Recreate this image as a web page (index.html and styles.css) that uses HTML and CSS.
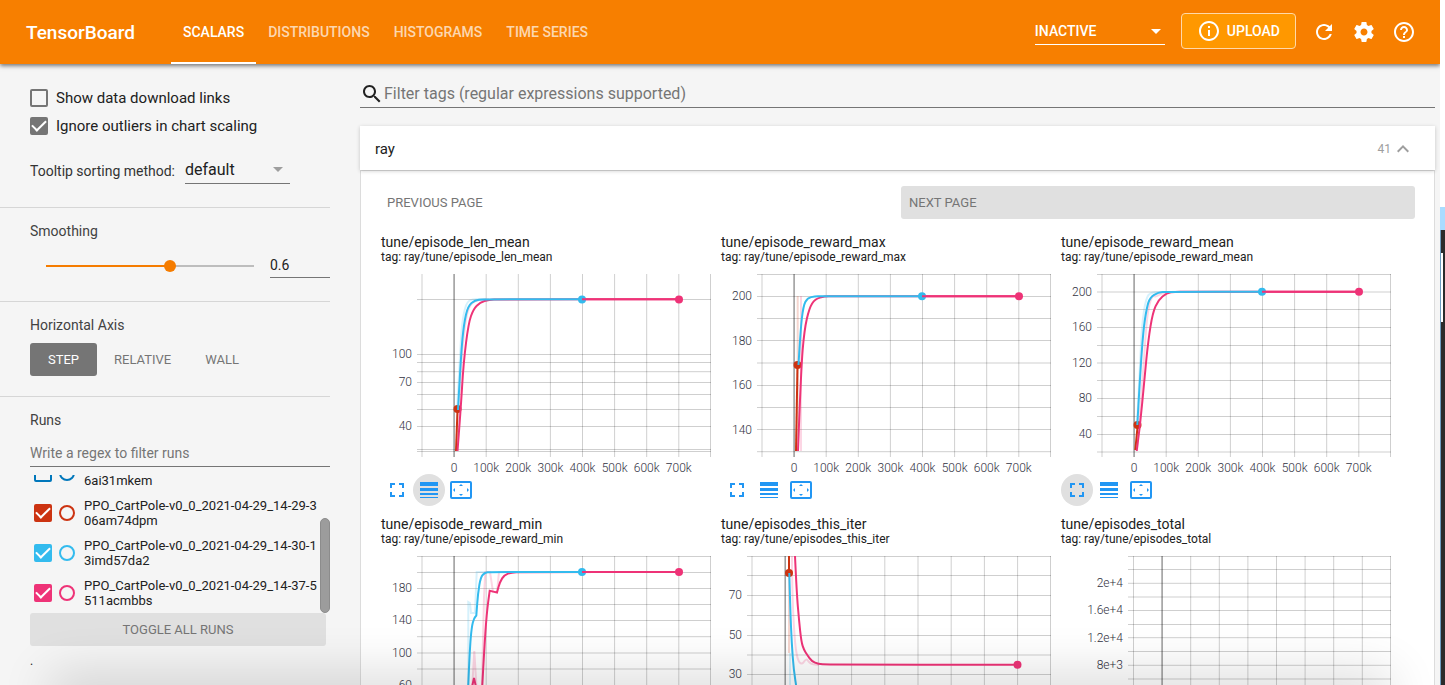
FILE: index.html
```
<!DOCTYPE html>
<html lang="en">
    <head>
        <meta charset="utf-8">
        <title>TensorBoard</title>
        <meta name="viewport" content="width=device-width, initial-scale=1">
        <link rel="stylesheet" href="styles.css">
    </head>
    <body>
        <div class="app">
            <header class="toolbar">
                <div class="brand">TensorBoard</div>
                <nav class="tabs">
                    <a href="#scalars" class="tab active">SCALARS</a>
                    <a href="#distributions" class="tab">DISTRIBUTIONS</a>
                    <a href="#histograms" class="tab">HISTOGRAMS</a>
                    <a href="#timeseries" class="tab">TIME SERIES</a>
                </nav>
                <div class="select-wrap plugins">
                    <select aria-label="Inactive plugins">
                        <option>INACTIVE</option>
                    </select>
                </div>
                <button class="upload">
                    <svg width="24" height="24" viewBox="0 0 24 24"><path d="M11 17h2v-6h-2v6zm1-15C6.48 2 2 6.48 2 12s4.48 10 10 10 10-4.48 10-10S17.52 2 12 2zm0 18c-4.41 0-8-3.59-8-8s3.59-8 8-8 8 3.59 8 8-3.59 8-8 8zM11 9h2V7h-2v2z"/></svg>
                    UPLOAD
                </button>
                <div class="toolbar-icons">
                    <button aria-label="Reload">
                        <svg width="24" height="24" viewBox="0 0 24 24"><path d="M17.65 6.35C16.2 4.9 14.21 4 12 4c-4.42 0-7.99 3.58-7.99 8s3.57 8 7.99 8c3.73 0 6.84-2.55 7.73-6h-2.08c-.82 2.33-3.04 4-5.65 4-3.31 0-6-2.69-6-6s2.69-6 6-6c1.66 0 3.14.69 4.22 1.78L13 11h7V4l-2.35 2.35z"/></svg>
                    </button>
                    <button aria-label="Settings">
                        <svg width="24" height="24" viewBox="0 0 24 24"><path d="M19.43 12.98c.04-.32.07-.64.07-.98s-.03-.66-.07-.98l2.11-1.65c.19-.15.24-.42.12-.64l-2-3.46c-.12-.22-.39-.3-.61-.22l-2.49 1c-.52-.4-1.08-.73-1.69-.98l-.38-2.65C14.46 2.18 14.25 2 14 2h-4c-.25 0-.46.18-.49.42l-.38 2.65c-.61.25-1.17.59-1.69.98l-2.49-1c-.23-.09-.49 0-.61.22l-2 3.46c-.13.22-.07.49.12.64l2.11 1.65c-.04.32-.07.65-.07.98s.03.66.07.98l-2.11 1.65c-.19.15-.24.42-.12.64l2 3.46c.12.22.39.3.61.22l2.49-1c.52.4 1.08.73 1.69.98l.38 2.65c.03.24.24.42.49.42h4c.25 0 .46-.18.49-.42l.38-2.65c.61-.25 1.17-.59 1.69-.98l2.49 1c.23.09.49 0 .61-.22l2-3.46c.12-.22.07-.49-.12-.64l-2.11-1.65zM12 15.5c-1.93 0-3.5-1.57-3.5-3.5s1.57-3.5 3.5-3.5 3.5 1.57 3.5 3.5-1.57 3.5-3.5 3.5z"/></svg>
                    </button>
                    <button aria-label="Help">
                        <svg width="24" height="24" viewBox="0 0 24 24"><path d="M11 18h2v-2h-2v2zm1-16C6.48 2 2 6.48 2 12s4.48 10 10 10 10-4.48 10-10S17.52 2 12 2zm0 18c-4.41 0-8-3.59-8-8s3.59-8 8-8 8 3.59 8 8-3.59 8-8 8zm0-14c-2.21 0-4 1.79-4 4h2c0-1.1.9-2 2-2s2 .9 2 2c0 2-3 1.75-3 5h2c0-2.25 3-2.5 3-5 0-2.21-1.79-4-4-4z"/></svg>
                    </button>
                </div>
            </header>

            <div class="page">
                <aside class="sidebar">
                    <section class="options">
                        <label class="check-row"><input type="checkbox" class="check">Show data download links</label>
                        <label class="check-row"><input type="checkbox" class="check" checked>Ignore outliers in chart scaling</label>
                        <div class="sorting">
                            <label for="sort-method">Tooltip sorting method:</label>
                            <div class="select-wrap sort">
                                <select id="sort-method">
                                    <option>default</option>
                                </select>
                            </div>
                        </div>
                    </section>
                    <section class="smoothing">
                        <label class="heading" for="smooth-range">Smoothing</label>
                        <div class="slider-row">
                            <input type="range" id="smooth-range" min="0" max="1" step="0.01" value="0.6">
                            <input type="text" id="smooth-value" aria-label="Smoothing value" value="0.6">
                        </div>
                    </section>
                    <section class="axis">
                        <div class="heading">Horizontal Axis</div>
                        <div class="axis-buttons">
                            <button class="selected">STEP</button>
                            <button>RELATIVE</button>
                            <button>WALL</button>
                        </div>
                    </section>
                    <section class="runs">
                        <label class="heading" for="run-filter">Runs</label>
                        <input type="text" id="run-filter" placeholder="Write a regex to filter runs">
                        <div class="run-scroller">
                            <div class="run-list" id="run-list">
                                <div class="run blue">
                                    <input type="checkbox" class="check" id="run-1">
                                    <input type="radio" name="run" aria-label="Only run 1">
                                    <label for="run-1">PPO_CartPole-v0_0_2021-04-29_14-28-56ai31mkem</label>
                                </div>
                                <div class="run red">
                                    <input type="checkbox" class="check" id="run-2" checked>
                                    <input type="radio" name="run" aria-label="Only run 2">
                                    <label for="run-2">PPO_CartPole-v0_0_2021-04-29_14-29-306am74dpm</label>
                                </div>
                                <div class="run cyan">
                                    <input type="checkbox" class="check" id="run-3" checked>
                                    <input type="radio" name="run" aria-label="Only run 3">
                                    <label for="run-3">PPO_CartPole-v0_0_2021-04-29_14-30-13imd57da2</label>
                                </div>
                                <div class="run pink">
                                    <input type="checkbox" class="check" id="run-4" checked>
                                    <input type="radio" name="run" aria-label="Only run 4">
                                    <label for="run-4">PPO_CartPole-v0_0_2021-04-29_14-37-5511acmbbs</label>
                                </div>
                            </div>
                            <div class="scroll-thumb"></div>
                        </div>
                        <button class="toggle-all">TOGGLE ALL RUNS</button>
                        <div class="logdir">.</div>
                    </section>
                </aside>

                <main class="center">
                    <div class="tag-filter">
                        <svg width="24" height="24" viewBox="0 0 24 24"><path d="M15.5 14h-.79l-.28-.27C15.41 12.59 16 11.11 16 9.5 16 5.91 13.09 3 9.5 3S3 5.91 3 9.5 5.91 16 9.5 16c1.61 0 3.09-.59 4.23-1.57l.27.28v.79l5 4.99L20.49 19l-4.99-5zm-6 0C7.01 14 5 11.99 5 9.5S7.01 5 9.5 5 14 7.01 14 9.5 11.99 14 9.5 14z"/></svg>
                        <input type="text" aria-label="Filter tags" placeholder="Filter tags (regular expressions supported)">
                    </div>
                    <button class="group-header">
                        <span>ray</span>
                        <span class="count">41</span>
                        <svg width="24" height="24" viewBox="0 0 24 24"><path d="M12 8l-6 6 1.41 1.41L12 10.83l4.59 4.58L18 14z"/></svg>
                    </button>
                    <div class="group-body">
                        <div class="pager">
                            <button disabled>PREVIOUS PAGE</button>
                            <button class="next">NEXT PAGE</button>
                        </div>
                        <div class="cards" id="cards"></div>
                    </div>
                </main>
            </div>
            <div class="bottom-shade"></div>
        </div>
        <div class="backdrop">
            <div class="sky"></div>
            <div class="dock"></div>
            <div class="sheet"></div>
            <div class="dock rest"></div>
        </div>
        <script src="charts.js"></script>
    </body>
</html>
```
FILE: styles.css
```
* {
    box-sizing: border-box;
}

body {
    margin: 0;
    height: 100vh;
    display: flex;
    overflow: hidden;
    font-family: Roboto, "Noto Sans", sans-serif;
    font-size: 14px;
    color: #212121;
    background: #fff;
}

button, input, select {
    font-family: inherit;
    color: inherit;
    border: 0;
    border-radius: 0;
    background: none;
    padding: 0;
    margin: 0;
    outline: 0;
}

button {
    cursor: pointer;
}

.app {
    flex: 1;
    min-width: 0;
    display: flex;
    flex-direction: column;
    background: #f5f5f5;
    overflow: hidden;
    position: relative;
}

/* toolbar */

.toolbar {
    flex: none;
    height: 64px;
    display: flex;
    align-items: center;
    padding: 0 16px 0 26px;
    background: #f77f00;
    color: #fff;
    box-shadow: 0 2px 4px rgba(0, 0, 0, .5);
    z-index: 1;
}

.brand {
    font-size: 19px;
    font-weight: 500;
    width: 145px;
}

.tabs {
    flex: 1;
    display: flex;
    align-self: stretch;
}

.tab {
    display: flex;
    align-items: center;
    padding: 2px 12px 0;
    color: rgba(255, 255, 255, .7);
    font-weight: 500;
    text-decoration: none;
    border-bottom: 2px solid transparent;
}

.tab.active {
    color: #fff;
    border-bottom-color: #fff;
}

.select-wrap {
    display: flex;
    align-items: center;
    border-bottom: 1px solid #757575;
}

.select-wrap select {
    flex: 1;
    appearance: none;
}

.select-wrap::after {
    content: "";
    margin: 0 7px 0 -17px;
    border: 5px solid transparent;
    border-top-color: #9e9e9e;
    border-bottom: 0;
    pointer-events: none;
}

.plugins {
    width: 130px;
    height: 26px;
    padding-bottom: 1px;
    border-bottom-color: #fff;
}

.plugins select {
    font-size: 14px;
    font-weight: 500;
}

.plugins::after {
    margin-right: 4px;
    margin-left: -14px;
    border-top-color: #fff;
}

.upload {
    display: flex;
    align-items: center;
    gap: 6px;
    height: 36px;
    margin: 0 8px 2px 16px;
    padding: 0 15px;
    border: 1px solid #ffd9a8;
    border-radius: 4px;
    background: #ff9800;
    font-size: 14px;
    font-weight: 500;
}

.toolbar svg {
    fill: #fff;
}

.toolbar-icons {
    display: flex;
}

.toolbar-icons button {
    width: 40px;
    height: 40px;
    padding: 8px;
}

/* sidebar */

.page {
    flex: 1;
    min-height: 0;
    display: flex;
    gap: 30px;
    padding-right: 5px;
}

.sidebar {
    flex: none;
    width: 330px;
}

.sidebar section {
    padding-left: 30px;
    border-bottom: 1px solid #d6d6d6;
}

.sidebar .runs {
    border-bottom: 0;
}

.heading {
    display: block;
    line-height: 16px;
    color: #424242;
}

.options {
    height: 144px;
    padding-top: 20px;
}

.check-row {
    display: flex;
    align-items: center;
    gap: 8px;
    height: 28px;
    font-size: 15px;
}

.check {
    flex: none;
    appearance: none;
    display: grid;
    place-items: center;
    width: 18px;
    height: 18px;
    border: 2px solid #757575;
    border-radius: 2px;
}

.check:checked {
    background: #757575;
}

.check:checked::after {
    content: "";
    width: 6px;
    height: 12px;
    margin-top: -5px;
    border: solid #fff;
    border-width: 0 2px 2px 0;
    transform: rotate(45deg);
}

.sorting {
    display: flex;
    align-items: flex-end;
    gap: 10px;
    margin-top: 16px;
    color: #333;
}

.sorting label {
    line-height: 26px;
}

.sort {
    width: 105px;
    height: 28px;
}

.sort select {
    font-size: 16px;
    color: #212121;
}

.smoothing {
    height: 94px;
    padding-top: 15px;
}

.slider-row {
    display: flex;
    align-items: center;
    gap: 16px;
    margin-top: 14px;
    padding-left: 16px;
}

#smooth-range {
    flex: 1;
    min-width: 0;
    height: 12px;
    appearance: none;
}

#smooth-range::-webkit-slider-runnable-track {
    height: 2px;
    background: linear-gradient(to right, #f57c00 60%, #bdbdbd 60%);
}

#smooth-range::-webkit-slider-thumb {
    appearance: none;
    width: 12px;
    height: 12px;
    margin-top: -5px;
    border-radius: 50%;
    background: #f57c00;
}

#smooth-value {
    width: 60px;
    height: 25px;
    font-size: 14px;
    border-bottom: 1px solid #757575;
}

.axis {
    height: 95px;
    padding-top: 15px;
}

.axis-buttons {
    display: flex;
    margin-top: 10px;
}

.axis-buttons button {
    height: 33px;
    padding: 0 17px;
    border-radius: 3px;
    font-size: 13px;
    color: #757575;
}

.axis-buttons .selected {
    padding: 0 18px;
    background: #757575;
    color: #fff;
}

.runs {
    padding-top: 15px;
}

#run-filter {
    display: block;
    width: 100%;
    height: 27px;
    margin-top: 12px;
    font-size: 14px;
    border-bottom: 1px solid #757575;
}

::placeholder {
    color: #757575;
}

.run-scroller {
    display: flex;
    height: 138px;
    margin-top: 8px;
}

.run-list {
    flex: 1;
    overflow-y: auto;
    scrollbar-width: none;
}

.scroll-thumb {
    align-self: flex-end;
    width: 10px;
    height: 95px;
    border: 1px solid #8c8c8c;
    border-radius: 5px;
    background: #9c9c9c;
}

.run {
    display: flex;
    align-items: center;
    height: 40px;
    padding-left: 4px;
    font-size: 13px;
    line-height: 15px;
}

.run label {
    width: 234px;
    word-break: break-all;
}

.run .check {
    border-color: currentColor;
}

.run .check:checked {
    background: currentColor;
}

.run input[type="radio"] {
    flex: none;
    appearance: none;
    width: 16px;
    height: 16px;
    margin: 0 9px 0 7px;
    border: 2px solid currentColor;
    border-radius: 50%;
}

.run.blue input { color: #0077bb; }
.run.red input { color: #cc3311; }
.run.cyan input { color: #33bbee; }
.run.pink input { color: #ee3377; }

.toggle-all {
    display: block;
    width: 296px;
    height: 33px;
    border-radius: 3px;
    background: #e0e0e0;
    color: #757575;
    font-size: 13px;
}

.logdir {
    margin-top: 8px;
    font-size: 12px;
    line-height: 14px;
}

/* charts */

.center {
    flex: 1;
    min-width: 0;
}

.tag-filter {
    display: flex;
    align-items: center;
    height: 28px;
    margin: 16px 0 18px;
    border-bottom: 1px solid #757575;
}

.tag-filter svg {
    fill: #212121;
}

.tag-filter input {
    flex: 1;
    font-size: 16px;
}

.group-header {
    display: flex;
    align-items: center;
    width: 100%;
    height: 44px;
    padding: 1px 20px 0 15px;
    background: #fff;
    font-size: 15px;
    box-shadow: 0 1px 4px rgba(0, 0, 0, .2);
    position: relative;
}

.group-header .count {
    flex: 1;
    text-align: right;
    font-size: 12px;
    color: #9e9e9e;
}

.group-header svg {
    fill: #9e9e9e;
}

.group-body {
    padding: 15px 19px 0 18px;
    background: #fff;
    border: solid #dcdcdc;
    border-width: 1px 1px 0;
    min-height: 100%;
}

.pager {
    display: grid;
    grid-template-columns: 1fr 1fr;
    gap: 8px;
}

.pager button {
    height: 33px;
    padding: 0 8px;
    border-radius: 3px;
    text-align: left;
    font-size: 13px;
    color: #757575;
}

.pager .next {
    background: #e0e0e0;
}

.cards {
    display: flex;
    flex-wrap: wrap;
    gap: 10px;
    margin: 15px 0 0 2px;
}

.card {
    width: 330px;
}

.card h3 {
    margin: 0;
    font-size: 14px;
    font-weight: 400;
    line-height: 16px;
}

.card p {
    margin: 0 0 10px;
    font-size: 12px;
    line-height: 14px;
}

.chart {
    display: block;
    overflow: hidden;
}

.grid {
    stroke: #000;
    stroke-opacity: .19;
}

.grid .zero {
    stroke: #999;
    stroke-opacity: 1;
    stroke-width: 1.5;
}

.ticks {
    font-size: 12px;
    font-weight: 300;
    fill: #32323f;
}

.ticks .y { text-anchor: end; }
.ticks .x { text-anchor: middle; }

.line {
    fill: none;
    stroke-width: 2;
}

.faint {
    opacity: .2;
}

.line.red { stroke: #cc3311; }
.line.cyan { stroke: #33bbee; }
.line.pink { stroke: #ee3377; }
.dot.red { fill: #cc3311; }
.dot.cyan { fill: #33bbee; }
.dot.pink { fill: #ee3377; }

.actions {
    display: flex;
}

.actions button {
    display: grid;
    place-items: center;
    width: 32px;
    height: 32px;
    border-radius: 50%;
}

.actions button.on {
    background: #e0e0e0;
}

.actions svg {
    fill: #2196f3;
}

/* things behind and around the window */

.bottom-shade {
    position: absolute;
    left: 60px;
    right: 60px;
    bottom: -20px;
    height: 20px;
    box-shadow: 0 0 50px 10px rgba(0, 0, 0, .16);
    pointer-events: none;
    z-index: 2;
}

.backdrop {
    width: 5px;
    display: flex;
    flex-direction: column;
    padding-top: 207px;
}

.sky {
    height: 23px;
    background: #a9dcff;
}

.dock {
    height: 23px;
    background: #2b2b2b;
    border-left: 1px solid #6d9bc0;
}

.sheet {
    height: 69px;
    background: linear-gradient(to right, #6d9bc0 1px, #fff 1px 3px, #2b2b2b 3px);
}

.dock.rest {
    flex: 1;
}
```
FILE: charts.js
```
const runEnd = "M201 Y L298 Y";

const charts = [
    {
        tag: "tune/episode_len_mean",
        x0: 41, step: 32.1, left: 36, on: 1,
        rows: [25.5, 80.5, 88.5, 97.7, 108.5, 120.5, 135.5, 152.5, 175.5, 177.5],
        labels: [["100", 80], ["70", 108], ["40", 152]],
        lines: [
            ["cyan faint", [[76, 136], [79, 80], [81, 49], [85, 29], [91, 25], [105, 25]]],
            ["pink faint", [[76, 177], [80, 89], [84, 49], [88, 32], [95, 26], [108, 25]]],
            ["red", [[75, 177], [76.5, 136]], [76.5, 135]],
            ["pink", [[76.5, 177], [79.7, 136], [82.5, 89], [87.5, 49], [92.5, 35], [99, 28.5], [108, 25.5], [118, 25.3], [298, 25.3]], [298, 25.5]],
            ["cyan", [[77, 136], [80, 80], [83, 49], [87, 32], [94, 26], [102, 25.3], [201, 25.3]], [201, 25.5]]
        ],
        tail: 25.3
    },
    {
        tag: "tune/episode_reward_max",
        x0: 41, step: 32.1, left: 36,
        rows: [0.5, 22.5, 44.5, 66.5, 89, 111.5, 133.5, 155.5, 177.7],
        labels: [["200", 22], ["180", 67], ["160", 111], ["140", 156]],
        lines: [
            ["red faint", [[76.7, 22], [76.7, 177]]],
            ["pink faint", [[80, 22], [80, 177]]],
            ["red", [[75, 177], [76.5, 91]], [76.5, 91]],
            ["pink", [[77, 177], [80, 96], [83.3, 56], [88.3, 34], [94, 25], [104, 22.2], [112, 22.2], [298, 22.2]], [298, 22.2]],
            ["cyan", [[77.5, 91], [79.5, 56], [82.3, 32], [86.3, 24], [94, 22.2], [100, 22.2], [201, 22.2]], [201, 22.2]]
        ],
        tail: 22.2
    },
    {
        tag: "tune/episode_reward_mean",
        x0: 41, step: 32.1, left: 36, on: 0,
        rows: [0.5, 18, 35.5, 53.5, 71.5, 89, 106.5, 124.5, 142.5, 160.5, 178],
        labels: [["200", 18], ["160", 53], ["120", 89], ["80", 124], ["40", 160]],
        lines: [
            ["cyan faint", [[76, 151], [79, 90], [81, 50], [85, 24], [90, 18], [105, 18]]],
            ["pink faint", [[76, 177], [82, 100], [86, 40], [91, 21], [95, 23], [99, 20], [108, 18]]],
            ["red", [[74.3, 176], [76.7, 151]], [76.5, 151]],
            ["pink", [[75.7, 177], [79, 153], [83.3, 106], [87.3, 66], [91.7, 38.7], [97.3, 26], [105.7, 19], [114, 17.7], [124, 17.7], [298, 17.7]], [298, 17.7]],
            ["cyan", [[76.3, 151], [79, 103], [82.3, 56], [85.7, 34], [89, 23.3], [97.3, 18.3], [105.7, 17.7], [201, 17.7]], [201, 17.7]]
        ],
        tail: 17.7
    },
    {
        tag: "tune/episode_reward_min",
        x0: 41, step: 32.1, left: 36,
        rows: [0.5, 16.5, 32.5, 48.5, 64.5, 80.7, 97, 113, 129.5],
        labels: [["180", 32], ["140", 64], ["100", 97], ["60", 129]],
        lines: [
            ["cyan faint sharp", [[87.3, 129], [87.3, 46], [89, 47], [90, 57], [94, 57], [95.7, 16], [104, 16]]],
            ["pink faint sharp", [[91, 135], [93.3, 95], [95.7, 135]]],
            ["pink faint sharp", [[101, 129], [103, 41], [104.3, 16], [109, 16], [112, 36], [116, 36], [118, 16], [130, 16]]],
            ["pink sharp", [[91, 131], [93, 122], [95, 131]]],
            ["pink", [[101, 135], [103, 97], [105.7, 57], [108.7, 34.7], [108.7, 34.7], [116, 36.5], [116, 36.5], [119, 25.7], [123.3, 19], [130.7, 16.3], [140, 16], [298, 16]], [298, 16]],
            ["cyan", [[87, 135], [88.7, 94], [90.7, 70.7], [93, 62.3], [95.3, 59.7], [95.3, 59.7], [97, 37], [99.7, 21], [104, 16.5], [109, 16], [201, 16]], [201, 16]]
        ],
        tail: 16
    },
    {
        tag: "tune/episodes_this_iter",
        x0: 31, step: 33.2, left: 26,
        rows: [0.5, 19.5, 39.5, 59.5, 79.5, 99, 118.5, 138.5],
        labels: [["70", 39], ["50", 79], ["30", 118]],
        lines: [
            ["red faint", [[68, 17], [68, 97]]],
            ["cyan faint", [[69, 97], [69, 135]]],
            ["pink faint", [[71, 0], [71, 30], [73.3, 81], [76.3, 104], [81, 109], [85.3, 102], [89, 108], [98, 109]]],
            ["pink", [[74, 0], [75.7, 37], [78, 64], [80.3, 85.7], [83, 94], [86.3, 99], [90.7, 105.3], [97.3, 108], [105.7, 108.7], [296.5, 108.7]], [296.5, 108.7]],
            ["red", [[68, 0], [68, 17]], [68, 17]],
            ["cyan", [[68.3, 17], [69.3, 54], [70.7, 87], [72.7, 114], [76, 135]]]
        ]
    },
    {
        tag: "tune/episodes_total",
        x0: 72.5, step: 28.6, left: 67,
        rows: [0.5, 13.5, 27.3, 41, 54.5, 68.5, 81.7, 95.5, 109.3, 123],
        labels: [["2e+4", 27], ["1.6e+4", 54], ["1.2e+4", 82], ["8e+3", 109]],
        lines: []
    }
];

// polyline, rounded through the midpoints unless it is sharp
function pathOf(points, sharp) {
    if (sharp || points.length < 3) {
        return "M" + points.map(p => p.join(" ")).join("L");
    }
    let d = "M" + points[0].join(" ");
    for (let i = 1; i < points.length - 1; i++) {
        const [x, y] = points[i];
        const [nx, ny] = points[i + 1];
        d += `Q${x} ${y} ${(x + nx) / 2} ${(y + ny) / 2}`;
    }
    return d + "L" + points[points.length - 1].join(" ");
}

function drawChart(chart, index) {
    let grid = "";
    let ticks = "";
    for (let i = 0; i < 10; i++) {
        const x = Math.min(chart.x0 + i * chart.step, 329.5);
        grid += `<line ${i === 1 ? 'class="zero"' : ""} x1="${x}" x2="${x}" y1="0" y2="183"/>`;
        if (i > 0 && i < 9) {
            ticks += `<text class="x" x="${x}" y="198">${i === 1 ? "0" : (i - 1) + "00k"}</text>`;
        }
    }
    chart.rows.forEach(y => {
        grid += `<line x1="${chart.left}" x2="330" y1="${y}" y2="${y}"/>`;
    });
    chart.labels.forEach(([text, y]) => {
        ticks += `<text class="y" x="${chart.left - 5}" y="${y + 4}">${text}</text>`;
    });

    let lines = "";
    chart.lines.forEach(([name, points, dot]) => {
        lines += `<path class="line ${name}" d="${pathOf(points, name.includes("sharp"))}"/>`;
        if (dot) {
            lines += `<circle class="dot ${name}" cx="${dot[0]}" cy="${dot[1]}" r="4"/>`;
        }
    });
    if (chart.tail) {
        lines += `<path class="line pink" d="${runEnd.replace(/Y/g, chart.tail)}"/>`;
    }

    return `<svg class="chart" width="330" height="200" viewBox="0 0 330 200">
        <clipPath id="clip-${index}"><rect x="${chart.left}" width="294" height="177"/></clipPath>
        <g class="grid">${grid}</g>
        <g clip-path="url(#clip-${index})">${lines}</g>
        <g class="ticks">${ticks}</g>
    </svg>`;
}

const icons = [
    ["Toggle full size", '<svg width="14" height="14" viewBox="0 0 14 14"><path d="M0 0h5v2H2v3H0zM9 0h5v5h-2V2H9zM0 9h2v3h3v2H0zM12 9h2v5H9v-2h3z"/></svg>'],
    ["Toggle y-axis log scale", '<svg width="18" height="16" viewBox="0 0 18 16"><path d="M0 0h18v4H0zM0 6h18v3H0zM0 11h18v2H0zM0 15h18v1H0z"/></svg>'],
    ["Fit domain to data", '<svg width="22" height="18" viewBox="0 0 22 18"><path fill-rule="evenodd" d="M2 0h18a2 2 0 0 1 2 2v14a2 2 0 0 1-2 2H2a2 2 0 0 1-2-2V2a2 2 0 0 1 2-2zm0 2v14h18V2zM11 3l2 2H9zM11 15l-2-2h4zM3 9l2-2v4zM19 9l-2 2V7z"/></svg>']
];

document.getElementById("cards").innerHTML = charts.map((chart, index) => {
    const buttons = icons.map(([label, svg], i) =>
        `<button aria-label="${label}" class="${chart.on === i ? "on" : ""}">${svg}</button>`
    ).join("");
    return `<div class="card">
        <h3>${chart.tag}</h3>
        <p>tag: ray/${chart.tag}</p>
        ${drawChart(chart, index)}
        <div class="actions">${buttons}</div>
    </div>`;
}).join("");

// newest runs are at the end of the list
const runList = document.getElementById("run-list");
runList.scrollTop = runList.scrollHeight;
```
